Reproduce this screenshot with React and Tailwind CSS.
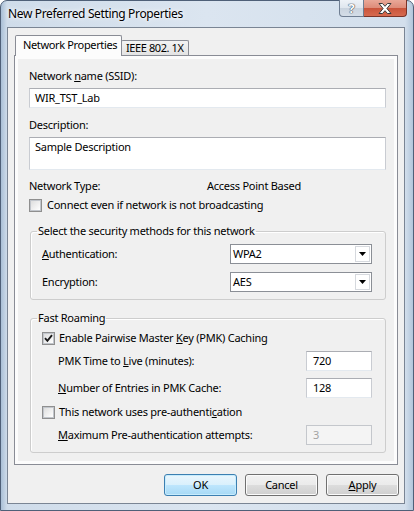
import React from "react";

const Check = ({ checked }) => (
  <span className="w-[13px] h-[13px] shrink-0 border border-[#8f8f8f] bg-[#f4f4f4] flex">
    <span className="flex-1 border border-[#c2c6cc] bg-[linear-gradient(135deg,#dedede,#ffffff)] flex items-center justify-center">
      {checked && (
        <svg width="9" height="9" viewBox="0 0 9 9">
          <path d="M1 4.2 L3.4 6.8 L8 1.2" fill="none" stroke="#1a1a1a" strokeWidth="1.9" />
        </svg>
      )}
    </span>
  </span>
);

const Arrow = () => (
  <svg width="7" height="4" viewBox="0 0 7 4">
    <path d="M0 0 H7 L3.5 4 Z" fill="#000" />
  </svg>
);

const Select = ({ value }) => (
  <div className="ml-auto w-[142px] h-[20px] border border-[#8b8f96] bg-white flex items-center p-[1px]">
    <span className="flex-1 pl-[1px] leading-[16px]">{value}</span>
    <span className="w-[15px] h-full border border-[#d6d9de] bg-white flex items-center justify-center">
      <Arrow />
    </span>
  </div>
);

const Num = ({ value, disabled }) =>
  disabled ? (
    <div className="ml-auto w-[66px] h-[20px] border border-[#c4c7cc] bg-[#f4f4f4] flex items-center pl-[6px] text-[#a3a3a3] leading-[16px]">
      {value}
    </div>
  ) : (
    <div className="ml-auto w-[66px] h-[20px] border border-[#c9ccd2] border-t-[#abadb3] border-b-[#e3e9ef] bg-white flex items-center pl-[6px] leading-[16px]">
      {value}
    </div>
  );

const Btn = ({ children, def }) =>
  def ? (
    <button className="w-[73px] h-[22px] rounded-[3px] border border-[#3c7fb1] bg-[linear-gradient(#eaf6fd,#d9f0fc_50%,#bee6fd_50%,#a7d9f5)] shadow-[inset_0_0_0_1px_#c7ecfd] leading-[16px] text-black">
      {children}
    </button>
  ) : (
    <button className="w-[73px] h-[22px] rounded-[3px] border border-[#707070] bg-[linear-gradient(#f2f2f2,#ebebeb_50%,#dddddd_50%,#cfcfcf)] shadow-[inset_0_0_0_1px_#fbfbfb] leading-[16px] text-black">
      {children}
    </button>
  );

export default function App() {
  return (
    <div className="w-[414px] h-[511px] bg-white font-['Noto_Sans',sans-serif] text-[11px] tracking-[-0.25px] text-black">
      <div className="w-[414px] h-[511px] rounded-t-[7px] border border-[#4f6078] bg-[linear-gradient(90deg,#a9bfd6_0px,#cfdcea_6px,#dbe5f0_50%,#d3dfec_calc(100%-8px),#b2c6db_100%)] flex flex-col pl-[6px]">
        {/* title bar */}
        <div className="h-[26px] flex justify-between">
          <div className="pl-[1px] pt-[5px] text-[12px] tracking-[-0.35px] leading-[16px] whitespace-nowrap [text-shadow:0_0_6px_#ffffff,0_0_3px_#ffffff]">
            New Preferred Setting Properties
          </div>
          <div className="flex items-start -mt-[1px] mr-[6px]">
            <div className="w-[25px] h-[17px] rounded-bl-[4px] border border-[#6f7e92] border-t-0 bg-[linear-gradient(#eef2f7,#dfe6ee_50%,#c9d3de_50%,#d4dde7)] flex items-center justify-center text-[13px] font-bold leading-[14px] text-white [text-shadow:0_0_1px_#3d4a5a,0_0_1px_#3d4a5a,0_0_1px_#3d4a5a]">
              ?
            </div>
            <div className="w-[43px] h-[17px] rounded-br-[4px] border border-[#7a3327] border-t-0 border-l-0 bg-[linear-gradient(#e9a898,#dd8b78_50%,#c9533a_50%,#d66a4f)] flex items-center justify-center">
              <svg width="14" height="11" viewBox="0 0 14 11">
                <path
                  d="M1 0.5 H4.5 L7 3.3 L9.5 0.5 H13 L8.9 5.5 L13 10.5 H9.5 L7 7.7 L4.5 10.5 H1 L5.1 5.5 Z"
                  fill="#ffffff"
                  stroke="#3b3b3b"
                  strokeWidth="1"
                  strokeLinejoin="round"
                />
              </svg>
            </div>
          </div>
        </div>

        {/* client */}
        <div className="w-[398px] h-[477px] border border-[#7a8594] bg-[#f0f0f0] flex flex-col">
          <div className="ml-[6px] mt-[7px] w-[384px] flex flex-col">
            {/* tabs */}
            <div className="flex items-end h-[20px] pl-[1px] whitespace-nowrap">
              <div className="relative z-10 w-[107px] h-[21px] -mb-[1px] border border-b-0 border-[#898c95] rounded-t-[2px] bg-[#fcfcfc] pl-[7px] pt-[1px] leading-[16px] tracking-[-0.35px]">
                Network Properties
              </div>
              <div className="-ml-[1px] w-[68px] h-[15px] border border-b-0 border-[#898c95] rounded-t-[2px] bg-[linear-gradient(#f3f3f3,#e3e3e3)] pl-[4px] leading-[14px] tracking-[-0.4px] overflow-hidden">
                IEEE 802. 1X
              </div>
            </div>
            {/* panel */}
            <div className="h-[410px] border border-[#898c95] bg-[#fcfcfc] p-[3px]">
              <div className="h-full bg-[#f0f0f0] pl-[11px] pt-[9px] flex flex-col">
                <div className="leading-[16px]">
                  Network <span className="underline">n</span>ame (SSID):
                </div>
                <div className="mt-[4px] w-[357px] h-[20px] border border-[#c9ccd2] border-t-[#abadb3] border-b-[#e3e9ef] bg-white pl-[5px] flex items-center leading-[16px]">
                  WIR_TST_Lab
                </div>
                <div className="mt-[9px] leading-[16px]">Description:</div>
                <div className="mt-[4px] w-[357px] h-[33px] border border-[#c9ccd2] border-t-[#abadb3] border-b-[#e3e9ef] bg-white pl-[5px] pt-[1px] leading-[16px]">
                  Sample Description
                </div>
                <div className="mt-[8px] h-[16px] flex leading-[16px]">
                  <span className="w-[178px]">Network Type:</span>
                  <span>Access Point Based</span>
                </div>
                <div className="mt-[3px] h-[16px] flex items-center">
                  <Check />
                  <span className="ml-[5px] leading-[16px]">Connect even if network is not broadcasting</span>
                </div>

                <fieldset className="mt-[10px] ml-[1px] w-[356px] border border-[#cdcdcd] rounded-[3px] shadow-[inset_1px_1px_0_#ffffff]">
                  <legend className="ml-[6px] px-[1px] leading-[16px]">Select the security methods for this network</legend>
                  <div className="pl-[11px] pr-[13px] pt-[5px] pb-[7px] flex flex-col">
                    <div className="h-[20px] flex items-center">
                      <span className="leading-[16px]">
                        <span className="underline">A</span>uthentication:
                      </span>
                      <Select value="WPA2" />
                    </div>
                    <div className="mt-[8px] h-[20px] flex items-center">
                      <span className="leading-[16px]">Encryption:</span>
                      <Select value="AES" />
                    </div>
                  </div>
                </fieldset>

                <fieldset className="mt-[10px] ml-[1px] w-[356px] border border-[#cdcdcd] rounded-[3px] shadow-[inset_1px_1px_0_#ffffff]">
                  <legend className="ml-[6px] px-[1px] leading-[16px]">Fast Roaming</legend>
                  <div className="pl-[11px] pr-[13px] pt-[4px] pb-[7px] flex flex-col">
                    <div className="h-[16px] flex items-center">
                      <Check checked />
                      <span className="ml-[4px] leading-[16px]">
                        Enable Pairwise Master <span className="underline">K</span>ey (PMK) Caching
                      </span>
                    </div>
                    <div className="mt-[5px] h-[20px] flex items-center pl-[16px]">
                      <span className="leading-[16px]">
                        PMK Time to <span className="underline">L</span>ive (minutes):
                      </span>
                      <Num value="720" />
                    </div>
                    <div className="mt-[7px] h-[20px] flex items-center pl-[16px]">
                      <span className="leading-[16px]">
                        <span className="underline">N</span>umber of Entries in PMK Cache:
                      </span>
                      <Num value="128" />
                    </div>
                    <div className="mt-[6px] h-[16px] flex items-center">
                      <Check />
                      <span className="ml-[4px] leading-[16px]">
                        This network uses pre-authenti<span className="underline">c</span>ation
                      </span>
                    </div>
                    <div className="mt-[5px] h-[20px] flex items-center pl-[16px]">
                      <span className="leading-[16px]">
                        <span className="underline">M</span>aximum Pre-authentication attempts:
                      </span>
                      <Num value="3" disabled />
                    </div>
                  </div>
                </fieldset>
              </div>
            </div>
          </div>
          {/* buttons */}
          <div className="mt-[9px] flex justify-end gap-[8px] pr-[5px]">
            <Btn def>OK</Btn>
            <Btn>Cancel</Btn>
            <Btn>
              <span className="underline">A</span>pply
            </Btn>
          </div>
        </div>
      </div>
    </div>
  );
}
